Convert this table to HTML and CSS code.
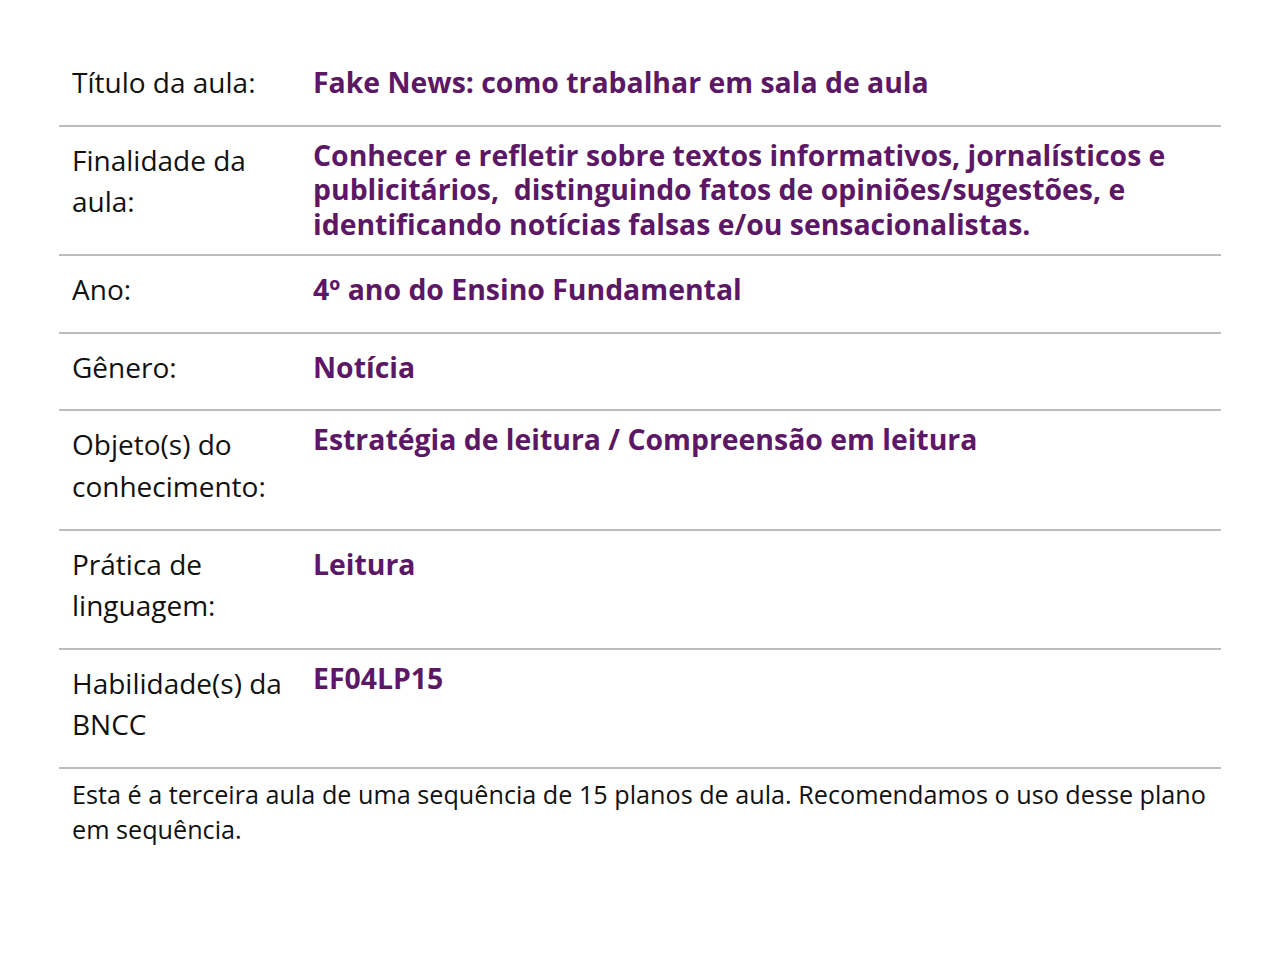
FILE: index.html
```html
<!DOCTYPE html>
<html lang="pt-BR">
<head>
<meta charset="utf-8">
<title>Plano de aula</title>
<link rel="stylesheet" href="styles.css">
</head>
<body>
<main class="plan">
  <div class="row">
    <div class="label">Título da aula:</div>
    <div class="value">Fake News: como trabalhar em sala de aula</div>
  </div>
  <div class="row">
    <div class="label">Finalidade da aula:</div>
    <div class="value value--up">Conhecer e refletir sobre textos informativos, jornalísticos e publicitários,&nbsp; distinguindo fatos de opiniões/sugestões, e identificando notícias falsas e/ou sensacionalistas.</div>
  </div>
  <div class="row">
    <div class="label">Ano:</div>
    <div class="value">4º ano do Ensino Fundamental</div>
  </div>
  <div class="row">
    <div class="label">Gênero:</div>
    <div class="value">Notícia</div>
  </div>
  <div class="row">
    <div class="label">Objeto(s) do conhecimento:</div>
    <div class="value value--up">Estratégia de leitura / Compreensão em leitura</div>
  </div>
  <div class="row">
    <div class="label">Prática de linguagem:</div>
    <div class="value">Leitura</div>
  </div>
  <div class="row">
    <div class="label">Habilidade(s) da BNCC</div>
    <div class="value value--up">EF04LP15</div>
  </div>
  <p class="note">Esta é a terceira aula de uma sequência de 15 planos de aula. Recomendamos o uso desse plano em sequência.</p>
</main>
</body>
</html>
```
FILE: styles.css
```css
html, body {
  margin: 0;
  padding: 0;
  background: #ffffff;
}
body {
  font-family: "Open Sans", "Noto Sans", sans-serif;
  color: #111111;
}
.plan {
  width: 1162px;
  margin: 0 0 0 59px;
  padding-top: 49px;
}
.row {
  display: grid;
  grid-template-columns: 241px 1fr;
  border-bottom: 2px solid #bcbcbc;
}
.label {
  padding: 13px 0 21.3px 13px;
  font-size: 28px;
  line-height: 41.5px;
}
.value {
  padding: 13px 13px 21.3px 13px;
  font-size: 28.4px;
  line-height: 41.5px;
  font-weight: 700;
  color: #5c1765;
}
.value--up {
  padding-top: 11px;
  padding-bottom: 12.5px;
  line-height: 34.5px;
}
.note {
  margin: 0;
  padding: 8px 13px 0 13px;
  font-size: 25.2px;
  line-height: 35px;
}
```
